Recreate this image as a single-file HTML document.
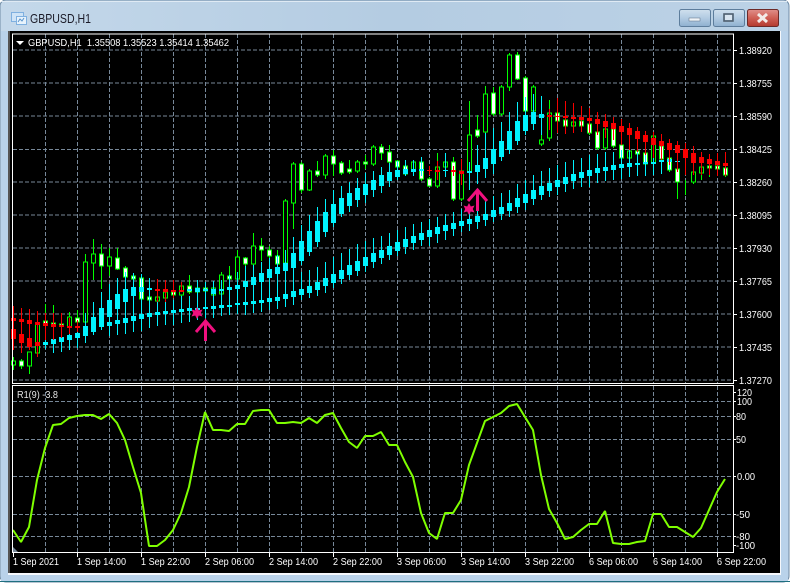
<!DOCTYPE html>
<html><head><meta charset="utf-8"><style>
html,body{margin:0;padding:0;background:#fff;width:791px;height:583px;overflow:hidden}
svg{display:block}
text{font-family:"Liberation Sans",sans-serif;font-size:10.5px;fill:#fff}
</style></head><body>
<svg width="791" height="583" viewBox="0 0 791 583" xmlns="http://www.w3.org/2000/svg">
<defs>
<linearGradient id="t" x1="0" y1="0" x2="1" y2="0"><stop offset="0" stop-color="#c4d8ea"/><stop offset=".5" stop-color="#b4cce2"/><stop offset="1" stop-color="#bcd2e6"/></linearGradient>
<linearGradient id="b" x1="0" y1="0" x2="0" y2="1"><stop offset="0" stop-color="#d0e0ee"/><stop offset=".5" stop-color="#b2cbe2"/><stop offset="1" stop-color="#8fb0d0"/></linearGradient>
<linearGradient id="r" x1="0" y1="0" x2="0" y2="1"><stop offset="0" stop-color="#e0908a"/><stop offset=".5" stop-color="#cf5f55"/><stop offset="1" stop-color="#b33a2e"/></linearGradient>
</defs>
<rect x="0" y="0" width="789" height="582" rx="6" fill="url(#t)" stroke="#6f8ba5"/>
<rect x="1" y="31" width="787" height="550" fill="#b9d2ea"/>
<rect x="1" y="1" width="786" height="1" fill="#dfeaf4"/>
<rect x="8" y="31" width="773" height="544" fill="#fff" opacity=".85"/>
<rect x="8" y="31" width="772" height="542" fill="#000"/>
<rect x="8" y="31" width="2" height="542" fill="#555"/>
<rect x="0" y="581" width="790" height="1" fill="#1f6f80"/>

<!-- title icon -->
<g shape-rendering="crispEdges">
<rect x="11.500" y="12.500" width="12" height="9" fill="#cfe4f7" stroke="#7fb0e0"/>
<rect x="16.500" y="16.500" width="10" height="8" fill="#e8f3fc" stroke="#7fb0e0"/>
</g>
<path d="M18 22l2-3 2 2 2-3" fill="none" stroke="#5a94cc"/>
<text x="30" y="23" textLength="61" lengthAdjust="spacingAndGlyphs" style="font-size:13px;fill:#1b1b28">GBPUSD,H1</text>

<!-- buttons -->
<rect x="679.500" y="9.500" width="31" height="17" rx="2" fill="url(#b)" stroke="#5d7d9c"/>
<rect x="689" y="18" width="11" height="3" fill="#eef3f8" stroke="#5a6d80" stroke-width=".5"/>
<rect x="713.500" y="9.500" width="31" height="17" rx="2" fill="url(#b)" stroke="#5d7d9c"/>
<rect x="724" y="14" width="9" height="7" fill="none" stroke="#4f5f6f" stroke-width="1.600"/>
<rect x="725" y="15" width="7" height="5" fill="#d9e5f0"/>
<rect x="747.500" y="9.500" width="31" height="17" rx="2" fill="url(#r)" stroke="#6d2a28"/>
<path d="M758 14l9 8M767 14l-9 8" stroke="#f3ece9" stroke-width="3"/>

<!-- grid -->
<g fill="none" stroke="#778899" stroke-dasharray="4 2" shape-rendering="crispEdges">
<path d="M13 50H733M13 83H733M13 116H733M13 149.500H733M13 182H733M13 215H733M13 248H733M13 281H733M13 314H733M13 347H733M13 380H733"/>
<path d="M45.500 34V383M77.500 34V383M109.500 34V383M141.500 34V383M173.500 34V383M205.500 34V383M237.500 34V383M269.500 34V383M301.500 34V383M333.500 34V383M365.500 34V383M397.500 34V383M429.500 34V383M461.500 34V383M493.500 34V383M525.500 34V383M557.500 34V383M589.500 34V383M621.500 34V383M653.500 34V383M685.500 34V383M717.500 34V383"/>
<path d="M13 401.500H733M13 416.500H733M13 439.500H733M13 476.500H733M13 514.500H733M13 536.500H733"/>
<path d="M45.500 386V552M77.500 386V552M109.500 386V552M141.500 386V552M173.500 386V552M205.500 386V552M237.500 386V552M269.500 386V552M301.500 386V552M333.500 386V552M365.500 386V552M397.500 386V552M429.500 386V552M461.500 386V552M493.500 386V552M525.500 386V552M557.500 386V552M589.500 386V552M621.500 386V552M653.500 386V552M685.500 386V552M717.500 386V552"/>
</g>

<g shape-rendering="crispEdges" fill="none">
<!-- green wicks -->
<path stroke="#00ff00" d="M13.500 357V370M21.500 359V369M29.500 352V374M37.500 311V357M45.500 304V330M53.500 305V330M61.500 320V330M69.500 312V332M77.500 310V330M85.500 254V322M93.500 239V280M101.500 244V289M109.500 248V276M117.500 248V270M125.500 266V279M133.500 273V281M141.500 274V301M149.500 285V302M157.500 291V304M165.500 285V300M173.500 288V297M181.500 283V297M189.500 275V294M197.500 282V294M205.500 282V293M213.500 284V297M221.500 272V296M229.500 266V285M237.500 250V281M245.500 257V266M253.500 233V266M261.500 238V261M269.500 246V258M277.500 250V266M285.500 199V265M293.500 162V229M301.500 162V193M309.500 169V191M317.500 161V177M325.500 154V179M333.500 150V176M341.500 161V175M349.500 160V174M357.500 160V173M365.500 155V169M373.500 145V166M381.500 144V160M389.500 145V164M397.500 160V169M405.500 163V176M413.500 160V173M421.500 160V181M429.500 177V187M437.500 153V188M445.500 153V169M453.500 157V201M461.500 165V201M469.500 101V190M477.500 115V138M485.500 86V134M493.500 87V116M501.500 85V116M509.500 53V91M517.500 52V80M525.500 76V113M533.500 85V113M541.500 134V146M549.500 100V141M557.500 111V123M565.500 118V134M573.500 120V128M581.500 119V128M589.500 122V135M597.500 130V150M605.500 127V150M613.500 127V148M621.500 143V160M629.500 138V160M637.500 149V156M645.500 151V166M653.500 134V165M661.500 144V161M669.500 156V172M677.500 167V199M685.500 180V195M693.500 170V184M701.500 165V180M709.500 164V177M717.500 164V176M725.500 166V177"/>
<!-- hollow candles -->
<path stroke="#00ff00" fill="#000" d="M11.500 361h4v4h-4zM27.500 352h4v14h-4zM35.500 324h4v29h-4zM67.500 317h4v10h-4zM83.500 262h4v60h-4zM91.500 254h4v9h-4zM107.500 257h4v9h-4zM155.500 297h4v4h-4zM163.500 292h4v6h-4zM179.500 286h4v9h-4zM195.500 288h4v4h-4zM211.500 288h4v7h-4zM219.500 275h4v19h-4zM235.500 257h4v22h-4zM251.500 246h4v18h-4zM283.500 201h4v62h-4zM291.500 164h4v39h-4zM307.500 171h4v19h-4zM323.500 156h4v19h-4zM355.500 162h4v9h-4zM371.500 147h4v17h-4zM411.500 162h4v9h-4zM435.500 167h4v19h-4zM443.500 162h4v5h-4zM459.500 171h4v28h-4zM467.500 135h4v37h-4zM483.500 94h4v38h-4zM499.500 87h4v27h-4zM507.500 55h4v32h-4zM531.500 87h4v24h-4zM539.500 140h4v4h-4zM547.500 113h4v25h-4zM571.500 122h4v4h-4zM603.500 129h4v19h-4zM627.500 151h4v7h-4zM651.500 136h4v27h-4zM691.500 172h4v10h-4zM699.500 167h4v6h-4z"/>
<!-- white candles -->
<path stroke="#00ff00" fill="#fff" d="M19.500 361h4v5h-4zM43.500 321h4v3h-4zM51.500 323h4v2h-4zM59.500 324h4v2h-4zM75.500 318h4v4h-4zM99.500 254h4v12h-4zM115.500 258h4v11h-4zM123.500 268h4v9h-4zM131.500 276h4v3h-4zM139.500 278h4v21h-4zM147.500 297h4v3h-4zM171.500 292h4v3h-4zM187.500 286h4v6h-4zM203.500 288h4v3h-4zM227.500 276h4v3h-4zM243.500 258h4v6h-4zM259.500 246h4v4h-4zM267.500 250h4v6h-4zM275.500 256h4v8h-4zM299.500 164h4v26h-4zM315.500 171h4v4h-4zM331.500 156h4v8h-4zM339.500 163h4v10h-4zM347.500 169h4v3h-4zM363.500 162h4v2h-4zM379.500 147h4v6h-4zM387.500 152h4v10h-4zM395.500 161h4v6h-4zM403.500 166h4v8h-4zM419.500 162h4v17h-4zM427.500 179h4v7h-4zM451.500 162h4v37h-4zM475.500 130h4v6h-4zM491.500 93h4v21h-4zM515.500 55h4v24h-4zM523.500 78h4v33h-4zM555.500 113h4v8h-4zM563.500 120h4v6h-4zM579.500 121h4v5h-4zM587.500 124h4v9h-4zM595.500 132h4v16h-4zM611.500 129h4v17h-4zM619.500 145h4v13h-4zM635.500 151h4v3h-4zM643.500 153h4v11h-4zM659.500 146h4v13h-4zM667.500 158h4v12h-4zM675.500 169h4v13h-4zM707.500 166h4v2h-4zM715.500 166h4v3h-4zM723.500 168h4v7h-4z"/>
<!-- cyan wicks -->
<path stroke="#00f4ff" d="M45.500 340V349M53.500 330V353M61.500 330V352M69.500 328V350M77.500 327V348M85.500 313V343M93.500 302V335M101.500 292V330M109.500 284V336M117.500 278V335M125.500 272V334M133.500 273V332M141.500 274V331M149.500 278V328M157.500 300V326M165.500 302V325M173.500 300V325M181.500 296V323M189.500 296V322M197.500 280V320M205.500 282V318M213.500 281V318M221.500 280V316M229.500 275V315M237.500 272V314M245.500 266V315M253.500 265V313M261.500 262V312M269.500 258V310M277.500 255V309M285.500 250V307M293.500 237V305M301.500 225V265M301.500 272V300M309.500 215V256M309.500 270V298M317.500 207V247M317.500 267V296M325.500 199V237M325.500 262V293M333.500 190V227M333.500 257V288M341.500 186V217M341.500 253V284M349.500 182V212M349.500 249V280M357.500 178V207M357.500 244V276M365.500 173V203M365.500 241V272M373.500 171V197M373.500 238V268M381.500 167V193M381.500 236V264M389.500 163V187M389.500 233V260M397.500 161V180M397.500 230V256M405.500 160V176M405.500 227V254M413.500 160V176M413.500 224V250M421.500 157V176M421.500 222V246M429.500 219V246M437.500 217V243M445.500 153V177M445.500 214V240M453.500 212V236M461.500 209V232M469.500 162V190M469.500 206V231M477.500 145V184M477.500 203V229M485.500 133V178M485.500 199V226M493.500 128V174M493.500 196V222M501.500 122V161M501.500 193V220M509.500 112V154M509.500 190V217M517.500 102V145M517.500 184V213M525.500 97V135M525.500 180V210M533.500 94V130M533.500 175V205M541.500 96V135M541.500 171V200M549.500 168V197M557.500 165V195M565.500 162V192M573.500 160V189M581.500 158V187M589.500 155V187M597.500 154V183M605.500 152V181M613.500 152V180M621.500 150V179M629.500 148V177M637.500 148V176M645.500 146V176M653.500 146V175M661.500 145V174M669.500 152V170M677.500 154V168"/>
<!-- cyan bodies -->
<path stroke="#00f4ff" stroke-width="5" d="M45.500 342V345M53.500 339V344M61.500 337V342M69.500 335V340M77.500 333V338M85.500 326V336M93.500 317V332M101.500 308V327M109.500 300V317M109.500 322V326M117.500 294V309M117.500 320V324M125.500 289V302M125.500 318V323M133.500 287V296M133.500 316V321M141.500 287V292M141.500 314V319M149.500 288V290M149.500 313V317M157.500 312V315M165.500 311V314M173.500 310V313M181.500 309V312M189.500 308V311M189.500 289V291M197.500 288V292M197.500 308V310M205.500 289V291M205.500 307V309M213.500 289V294M213.500 306V309M221.500 289V291M221.500 305V308M229.500 287V290M229.500 305V307M237.500 285V289M237.500 303V305M245.500 281V287M245.500 302V305M253.500 277V285M253.500 301V304M261.500 273V282M261.500 300V303M269.500 269V278M269.500 298V302M277.500 267V274M277.500 297V301M285.500 263V271M285.500 294V299M293.500 253V268M293.500 291V297M301.500 241V261M301.500 289V295M309.500 231V252M309.500 286V293M317.500 221V242M317.500 282V290M325.500 212V232M325.500 278V286M333.500 204V223M333.500 274V283M341.500 198V214M341.500 270V279M349.500 193V206M349.500 265V275M357.500 188V200M357.500 261V271M365.500 184V195M365.500 257V266M373.500 180V190M373.500 253V262M381.500 175V186M381.500 250V258M389.500 172V181M389.500 246V255M397.500 170V177M397.500 242V251M405.500 169V174M405.500 239V247M413.500 169V172M413.500 236V243M421.500 169V171M421.500 233V240M429.500 230V237M437.500 227V234M445.500 170V171M445.500 225V231M453.500 223V229M461.500 221V226M469.500 171V173M469.500 219V224M477.500 165V172M477.500 216V222M485.500 158V169M485.500 214V220M493.500 149V164M493.500 210V217M501.500 141V157M501.500 207V214M509.500 131V150M509.500 203V211M517.500 121V141M517.500 198V207M525.500 115V131M525.500 194V203M533.500 112V124M533.500 190V199M541.500 114V118M541.500 186V195M549.500 183V191M557.500 180V187M565.500 177V184M573.500 174V181M581.500 172V178M589.500 170V176M597.500 168V173M605.500 167V171M613.500 165V170M621.500 164V168M629.500 163V167M637.500 163V165M645.500 162V164M653.500 162V164M661.500 160V162M669.500 159V162M677.500 161V162"/>
<!-- red wicks -->
<path stroke="#f80000" d="M13.500 306V350M21.500 308V353M29.500 309V350M37.500 311V357M45.500 313V340M53.500 313V340M61.500 313V338M69.500 318V334M77.500 320V332M157.500 279V302M165.500 280V302M173.500 280V298M181.500 282V292M429.500 166V175M437.500 161V180M453.500 166V176M461.500 159V185M549.500 109V130M557.500 98V133M565.500 101V134M573.500 103V133M581.500 106V132M589.500 108V133M597.500 112V135M605.500 114V138M613.500 117V140M621.500 119V145M629.500 123V150M637.500 127V152M645.500 131V155M653.500 132V158M661.500 134V160M669.500 139V165M677.500 141V172M685.500 143V175M693.500 146V175M701.500 152V175M709.500 154V175M717.500 153V176M725.500 152V176"/>
<!-- red bodies -->
<path stroke="#f80000" stroke-width="5" d="M13.500 329V339M13.500 318V321M21.500 334V343M21.500 319V322M29.500 338V347M29.500 320V324M37.500 342V346M37.500 322V325M45.500 323V326M53.500 324V327M61.500 325V327M69.500 326V328M77.500 326V328M157.500 289V291M165.500 289V292M173.500 290V292M181.500 290V292M429.500 170V171M437.500 170V172M453.500 170V172M461.500 171V174M549.500 115V117M557.500 116V117M565.500 116V118M573.500 117V119M581.500 117V120M589.500 118V121M597.500 119V124M605.500 121V127M613.500 123V129M621.500 126V132M629.500 128V135M637.500 131V139M645.500 135V142M653.500 138V145M661.500 141V146M669.500 143V150M677.500 145V153M685.500 149V158M693.500 153V163M701.500 157V163M709.500 159V164M717.500 161V165M725.500 163V166"/>
</g>

<!-- arrows and stars -->
<g fill="none" stroke="#f0107f">
<path d="M205.500 341V322" stroke-width="3"/>
<path d="M196 332L205.500 321 215 332" stroke-width="3"/>
<path d="M477.500 211V192" stroke-width="3"/>
<path d="M468 201L477.500 190 487 201" stroke-width="3"/>
</g>
<polygon fill="#f0107f" points="197,307 198.800,310.500 202.500,309.500 200.800,313 202.500,316.500 198.800,315.500 197,319 195.200,315.500 191.500,316.500 193.200,313 191.500,309.500 195.200,310.500"/>
<polygon fill="#f0107f" points="469,203 470.800,206.500 474.500,205.500 472.800,209 474.500,212.500 470.800,211.500 469,215 467.200,211.500 463.500,212.500 465.200,209 463.500,205.500 467.200,206.500"/>

<!-- RSI -->
<polyline fill="none" stroke="#7fff00" stroke-width="2" stroke-linejoin="bevel" points="13,530 21,542 29,527 37,480 45,448 53,425 61,424 69,418 77,416 85,415 93,415 101,419 109,414 117,423 125,440 133,467 141,493 149,546 157,546 165,540 173,530 181,513 189,487 197,447 205,412 213,430 221,430 229,431 237,424 245,424 253,411 261,410 269,410 277,423 285,423 293,422 301,423 309,418 317,423 325,415 333,413 341,428 349,442 357,448 365,436 373,436 381,432 389,445 397,445 405,462 413,477 421,513 429,533 437,539 445,513 453,513 461,500 469,465 477,443 485,421 493,417 501,413 509,406 517,404 525,417 533,430 541,475 549,509 557,523 565,539 573,537 581,530 589,524 597,524 605,511 613,543 621,544 629,544 637,542 645,541 653,514 661,514 669,527 677,527 685,532 693,537 701,528 709,510 717,492 725,479"/>

<!-- panel frames -->
<g shape-rendering="crispEdges" fill="none" stroke="#fff">
<path d="M12.500 34V383.500H733.500V34ZM12.500 385.500H733.500V552.500H12.500Z"/>
<path d="M733 50.500h4M733 83.500h4M733 116.500h4M733 149.500h4M733 182.500h4M733 215.500h4M733 248.500h4M733 281.500h4M733 314.500h4M733 347.500h4M733 380.500h4"/>
<path d="M733 392.500h3M733 401.500h3M733 416.500h3M733 439.500h3M733 476.500h3M733 514.500h3M733 536.500h3M733 545.500h3"/>
<path d="M13.500 553V557M77.500 553V557M141.500 553V557M205.500 553V557M269.500 553V557M333.500 553V557M397.500 553V557M461.500 553V557M525.500 553V557M589.500 553V557M653.500 553V557M717.500 553V557"/>
</g>
<polygon points="13,547 13,552 18,552" fill="#778899"/>

<!-- header -->
<polygon points="16,41 24,41 20,45" fill="#fff"/>
<text x="28" y="46" textLength="201" lengthAdjust="spacingAndGlyphs" xml:space="preserve">GBPUSD,H1  1.35508 1.35523 1.35414 1.35462</text>
<text x="17" y="398" textLength="41" lengthAdjust="spacingAndGlyphs" style="fill:#e4e4e4">R1(9) -3.8</text>

<!-- price labels -->
<text x="739" y="54" textLength="33" lengthAdjust="spacingAndGlyphs">1.38920</text>
<text x="739" y="87" textLength="33" lengthAdjust="spacingAndGlyphs">1.38755</text>
<text x="739" y="120" textLength="33" lengthAdjust="spacingAndGlyphs">1.38590</text>
<text x="739" y="153" textLength="33" lengthAdjust="spacingAndGlyphs">1.38425</text>
<text x="739" y="186" textLength="33" lengthAdjust="spacingAndGlyphs">1.38260</text>
<text x="739" y="219" textLength="33" lengthAdjust="spacingAndGlyphs">1.38095</text>
<text x="739" y="252" textLength="33" lengthAdjust="spacingAndGlyphs">1.37930</text>
<text x="739" y="285" textLength="33" lengthAdjust="spacingAndGlyphs">1.37765</text>
<text x="739" y="318" textLength="33" lengthAdjust="spacingAndGlyphs">1.37600</text>
<text x="739" y="351" textLength="33" lengthAdjust="spacingAndGlyphs">1.37435</text>
<text x="739" y="384" textLength="33" lengthAdjust="spacingAndGlyphs">1.37270</text>

<text x="737" y="396" textLength="15" lengthAdjust="spacingAndGlyphs">120</text>
<text x="737" y="405" textLength="15" lengthAdjust="spacingAndGlyphs">100</text>
<text x="736" y="420" textLength="10" lengthAdjust="spacingAndGlyphs">80</text>
<text x="736" y="443" textLength="10" lengthAdjust="spacingAndGlyphs">50</text>
<text x="737" y="480" textLength="18" lengthAdjust="spacingAndGlyphs">0.00</text>
<text x="736" y="518" textLength="14" lengthAdjust="spacingAndGlyphs">-50</text>
<text x="736" y="540" textLength="14" lengthAdjust="spacingAndGlyphs">-80</text>
<text x="736" y="549" textLength="19" lengthAdjust="spacingAndGlyphs">-100</text>

<!-- time labels -->
<text x="13" y="565" textLength="46" lengthAdjust="spacingAndGlyphs">1 Sep 2021</text>
<text x="77" y="565" textLength="49" lengthAdjust="spacingAndGlyphs">1 Sep 14:00</text>
<text x="141" y="565" textLength="49" lengthAdjust="spacingAndGlyphs">1 Sep 22:00</text>
<text x="205" y="565" textLength="49" lengthAdjust="spacingAndGlyphs">2 Sep 06:00</text>
<text x="269" y="565" textLength="49" lengthAdjust="spacingAndGlyphs">2 Sep 14:00</text>
<text x="333" y="565" textLength="49" lengthAdjust="spacingAndGlyphs">2 Sep 22:00</text>
<text x="397" y="565" textLength="49" lengthAdjust="spacingAndGlyphs">3 Sep 06:00</text>
<text x="461" y="565" textLength="49" lengthAdjust="spacingAndGlyphs">3 Sep 14:00</text>
<text x="525" y="565" textLength="49" lengthAdjust="spacingAndGlyphs">3 Sep 22:00</text>
<text x="589" y="565" textLength="49" lengthAdjust="spacingAndGlyphs">6 Sep 06:00</text>
<text x="653" y="565" textLength="49" lengthAdjust="spacingAndGlyphs">6 Sep 14:00</text>
<text x="717" y="565" textLength="49" lengthAdjust="spacingAndGlyphs">6 Sep 22:00</text>
</svg>
</body></html>
